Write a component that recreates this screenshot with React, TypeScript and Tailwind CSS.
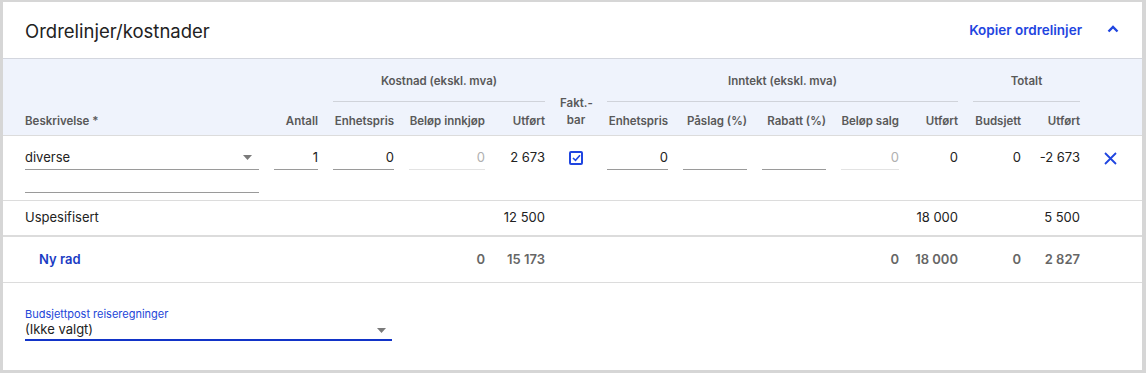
import React from "react";

const COLS =
  "grid grid-cols-[234px_44px_61px_76px_45px_32px_61px_64px_64px_58px_44px_48px_44px_30px] gap-x-[15px] pl-[22px]";

function Caret() {
  return (
    <svg width="9" height="5" viewBox="0 0 9 5" className="shrink-0">
      <path d="M0 0 L9 0 L4.5 5 Z" fill="#7a7a7a" />
    </svg>
  );
}

function NumInput({ value, disabled }: { value?: string; disabled?: boolean }) {
  return (
    <div
      className={`h-[24px] flex items-center justify-end border-b ${
        disabled ? "border-[#e3e3e3] text-[#b0b0b0]" : "border-[#9a9a9a] text-[#222]"
      } text-[13px]`}
    >
      {value}
    </div>
  );
}

export default function App() {
  return (
    <div className="w-[1148px] h-[373px] bg-white font-['Inter',sans-serif] text-[#222]">
      <div className="w-[1146px] h-[373px] border-l-[3px] border-t-2 border-r-[4px] border-b-[3px] border-[#d6d6d6] flex flex-col">
        {/* Header */}
        <div className="h-[57px] flex items-center pl-[22px] pr-[23px] border-b border-[#d3d6de] shrink-0">
          <div className="text-[18.5px] leading-[24px] text-[#222] mt-[1px]">Ordrelinjer/kostnader</div>
          <div className="ml-auto flex items-center">
            <span className="text-[13.5px] font-semibold text-[#1f45e0]">Kopier ordrelinjer</span>
            <svg width="12" height="8" viewBox="0 0 12 8" className="ml-[25px] mb-[2px]">
              <path d="M1.5 6.5 L6 2 L10.5 6.5" fill="none" stroke="#1f45e0" strokeWidth="2.4" />
            </svg>
          </div>
        </div>

        {/* Table header */}
        <div className="bg-[#eff3fc] border-b border-[#dcdcdc] shrink-0">
          <div className={`${COLS} text-[11.5px] font-semibold text-[#595959]`}>
            <div className="col-start-3 col-span-3 text-center pt-[14px] pb-[12px] leading-[16px] border-b border-[#d0d3da]">
              Kostnad (ekskl. mva)
            </div>
            <div className="col-start-7 col-span-5 text-center pt-[14px] pb-[12px] leading-[16px] border-b border-[#d0d3da]">
              Inntekt (ekskl. mva)
            </div>
            <div className="col-start-12 col-span-2 text-center pt-[14px] pb-[12px] leading-[16px] border-b border-[#d0d3da]">
              Totalt
            </div>

            <div className="row-start-2 col-start-1 pt-[11px] pb-[6px] leading-[16px]">Beskrivelse *</div>
            <div className="row-start-2 col-start-2 pt-[11px] pb-[6px] leading-[16px] text-right">Antall</div>
            <div className="row-start-2 col-start-3 pt-[11px] pb-[6px] leading-[16px] text-right whitespace-nowrap">Enhetspris</div>
            <div className="row-start-2 col-start-4 pt-[11px] pb-[6px] leading-[16px] text-right whitespace-nowrap">Beløp innkjøp</div>
            <div className="row-start-2 col-start-5 pt-[11px] pb-[6px] leading-[16px] text-right">Utført</div>
            <div className="row-start-1 row-span-2 col-start-6 self-end pb-[6px] leading-[17px] text-center">
              Fakt.-
              <br />
              bar
            </div>
            <div className="row-start-2 col-start-7 pt-[11px] pb-[6px] leading-[16px] text-right whitespace-nowrap">Enhetspris</div>
            <div className="row-start-2 col-start-8 pt-[11px] pb-[6px] leading-[16px] text-right whitespace-nowrap">Påslag (%)</div>
            <div className="row-start-2 col-start-9 pt-[11px] pb-[6px] leading-[16px] text-right whitespace-nowrap">Rabatt (%)</div>
            <div className="row-start-2 col-start-10 pt-[11px] pb-[6px] leading-[16px] text-right whitespace-nowrap">Beløp salg</div>
            <div className="row-start-2 col-start-11 pt-[11px] pb-[6px] leading-[16px] text-right">Utført</div>
            <div className="row-start-2 col-start-12 pt-[11px] pb-[6px] leading-[16px] text-right">Budsjett</div>
            <div className="row-start-2 col-start-13 pt-[11px] pb-[6px] leading-[16px] text-right">Utført</div>
          </div>
        </div>

        {/* Row 1 */}
        <div className="border-b border-[#dcdcdc] shrink-0">
          <div className={`${COLS} pt-[10px] h-[64px] text-[13px]`}>
            <div className="flex flex-col">
              <div className="h-[24px] flex items-center border-b border-[#9a9a9a] pr-[7px]">
                <span>diverse</span>
                <span className="ml-auto">
                  <Caret />
                </span>
              </div>
              <div className="h-[23px] border-b border-[#9a9a9a]" />
            </div>
            <NumInput value="1" />
            <NumInput value="0" />
            <NumInput value="0" disabled />
            <div className="h-[24px] flex items-center justify-end">2 673</div>
            <div className="h-[24px] flex items-center justify-center">
              <div className="w-[14px] h-[14px] border-2 border-[#1f45e0] rounded-[2px] flex items-center justify-center">
                <svg width="9" height="8" viewBox="0 0 9 8">
                  <path d="M1 4 L3.5 6.3 L8 1.3" fill="none" stroke="#1f45e0" strokeWidth="1.6" />
                </svg>
              </div>
            </div>
            <NumInput value="0" />
            <NumInput />
            <NumInput />
            <NumInput value="0" disabled />
            <div className="h-[24px] flex items-center justify-end">0</div>
            <div className="h-[24px] flex items-center justify-end">0</div>
            <div className="h-[24px] flex items-center justify-end whitespace-nowrap">-2 673</div>
            <div className="h-[24px] flex items-center justify-center">
              <svg width="13" height="13" viewBox="0 0 13 13">
                <path d="M1 1 L12 12 M12 1 L1 12" stroke="#1f45e0" strokeWidth="1.8" />
              </svg>
            </div>
          </div>
        </div>

        {/* Uspesifisert */}
        <div className="border-b-2 border-[#dcdcdc] shrink-0">
          <div className={`${COLS} h-[34px] items-center text-[13px]`}>
            <div className="col-start-1">Uspesifisert</div>
            <div className="col-start-5 text-right whitespace-nowrap">12 500</div>
            <div className="col-start-11 text-right whitespace-nowrap">18 000</div>
            <div className="col-start-13 text-right whitespace-nowrap">5 500</div>
          </div>
        </div>

        {/* Totals */}
        <div className="border-b border-[#dcdcdc] shrink-0">
          <div className={`${COLS} h-[45px] items-center text-[13px] font-semibold text-[#666]`}>
            <div className="col-start-1 pl-[14px] text-[#1a3cc4] font-semibold">Ny rad</div>
            <div className="col-start-4 text-right">0</div>
            <div className="col-start-5 text-right whitespace-nowrap">15 173</div>
            <div className="col-start-10 text-right">0</div>
            <div className="col-start-11 text-right whitespace-nowrap">18 000</div>
            <div className="col-start-12 text-right">0</div>
            <div className="col-start-13 text-right whitespace-nowrap">2 827</div>
          </div>
        </div>

        {/* Budget select */}
        <div className="pl-[22px] pt-[24px]">
          <div className="w-[367px]">
            <div className="text-[11px] leading-[14px] text-[#2346d8]">Budsjettpost reiseregninger</div>
            <div className="h-[20px] flex items-center border-b-2 border-[#1234c8] pr-[6px]">
              <span className="text-[13px]">(Ikke valgt)</span>
              <span className="ml-auto">
                <Caret />
              </span>
            </div>
          </div>
        </div>
      </div>
    </div>
  );
}
